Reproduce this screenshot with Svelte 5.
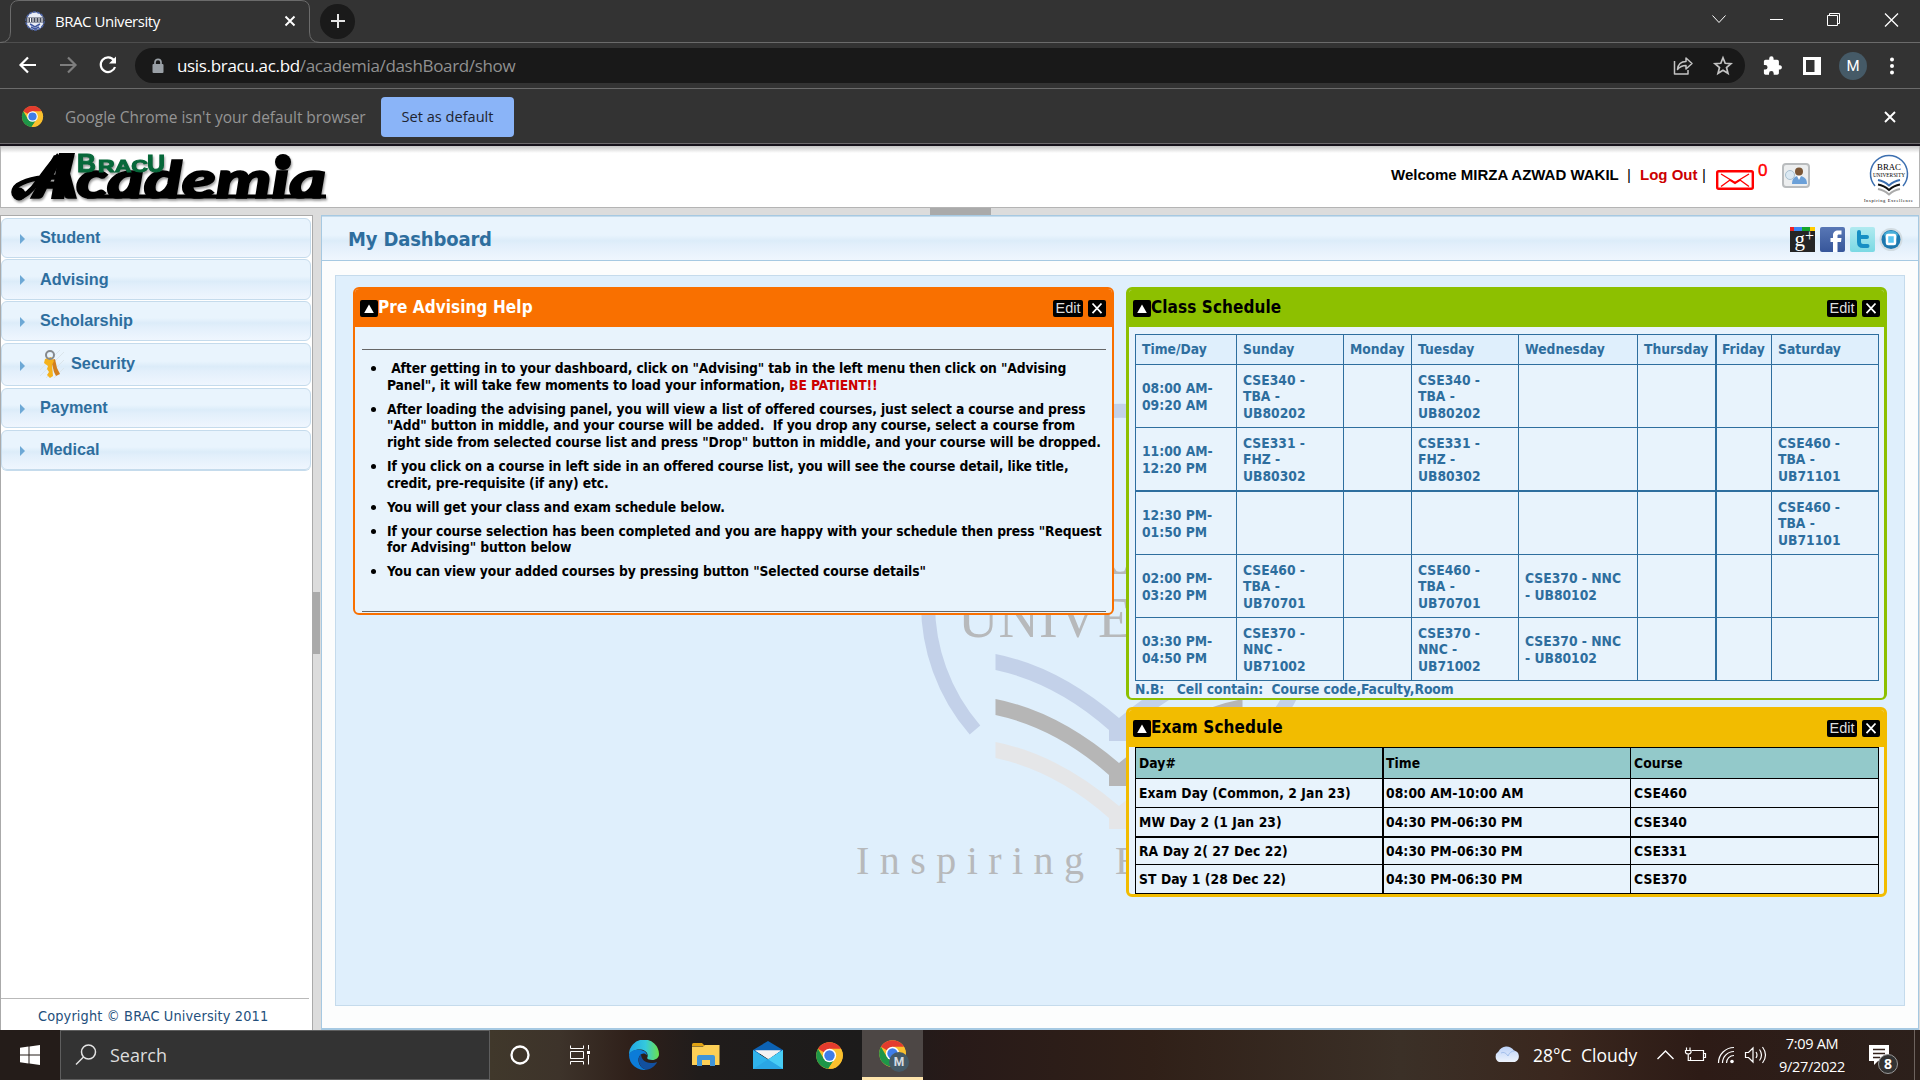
<script>
  const menu = [
    { label: 'Student', size: 'm1' },
    { label: 'Advising', size: 'm2' },
    { label: 'Scholarship', size: 'm3' },
    { label: 'Security', size: 'm4', keys: true },
    { label: 'Payment', size: 'm5' },
    { label: 'Medical', size: 'm6' }
  ];

  const tips = [
    ['\u00a0After getting in to your dashboard, click on "Advising" tab in the left menu then click on "Advising', 'Panel", it will take few moments to load your information, '],
    ['After loading the advising panel, you will view a list of offered courses, just select a course and press', '"Add" button in middle, and your course will be added.\u00a0 If you drop any course, select a course from', 'right side from selected course list and press "Drop" button in middle, and your course will be dropped.'],
    ['If you click on a course in left side in an offered course list, you will see the course detail, like title,', 'credit, pre-requisite (if any) etc.'],
    ['You will get your class and exam schedule below.'],
    ['If your course selection has been completed and you are happy with your schedule then press "Request', 'for Advising" button below'],
    ['You can view your added courses by pressing button "Selected course details"']
  ];

  const week = [
    ['Time/Day', 'Sunday', 'Monday', 'Tuesday', 'Wednesday', 'Thursday', 'Friday', 'Saturday'],
    ['08:00 AM-\n09:20 AM', 'CSE340 -\nTBA -\nUB80202', '', 'CSE340 -\nTBA -\nUB80202', '', '', '', ''],
    ['11:00 AM-\n12:20 PM', 'CSE331 -\nFHZ -\nUB80302', '', 'CSE331 -\nFHZ -\nUB80302', '', '', '', 'CSE460 -\nTBA -\nUB71101'],
    ['12:30 PM-\n01:50 PM', '', '', '', '', '', '', 'CSE460 -\nTBA -\nUB71101'],
    ['02:00 PM-\n03:20 PM', 'CSE460 -\nTBA -\nUB70701', '', 'CSE460 -\nTBA -\nUB70701', 'CSE370 - NNC\n- UB80102', '', '', ''],
    ['03:30 PM-\n04:50 PM', 'CSE370 -\nNNC -\nUB71002', '', 'CSE370 -\nNNC -\nUB71002', 'CSE370 - NNC\n- UB80102', '', '', '']
  ];

  const exams = [
    ['Day#', 'Time', 'Course'],
    ['Exam Day (Common, 2 Jan 23)', '08:00 AM-10:00 AM', 'CSE460'],
    ['MW Day 2 (1 Jan 23)', '04:30 PM-06:30 PM', 'CSE340'],
    ['RA Day 2( 27 Dec 22)', '04:30 PM-06:30 PM', 'CSE331'],
    ['ST Day 1 (28 Dec 22)', '04:30 PM-06:30 PM', 'CSE370']
  ];
</script>

{#snippet chromeLogo()}
  <svg class="chrome-logo" viewBox="0 0 48 48">
    <circle cx="24" cy="24" r="22" fill="#fbc02d" />
    <path d="M24 24 L4.9 13 A22 22 0 0 1 43.1 13 Z" fill="#e33b2e" />
    <path d="M4.9 13 A22 22 0 0 0 22 46 L33 29 L24 24 L14.5 29.5 Z" fill="#1e9648" />
    <path d="M24 13 H43 A22 22 0 0 1 22 46 L33.5 29.5 Z" fill="#fbc02d" />
    <circle cx="24" cy="24" r="11" fill="#fff" />
    <circle cx="24" cy="24" r="8.6" fill="#3f7de8" />
  </svg>
{/snippet}

{#snippet panelHead(title)}
  <div class="panel-head">
    <svg class="collapse" viewBox="0 0 18 17"><rect width="18" height="17" rx="2" fill="#000" /><path d="M9 4.500 L13.800 13 H4.200 Z" fill="#fff" /></svg>
    <h2>{title}</h2>
    <span class="edit">Edit</span>
    <svg class="close" viewBox="0 0 18 17"><rect width="18" height="17" rx="2" fill="#000" /><path d="M4.5 3.500 L13.5 13.2 M13.5 3.500 L4.5 13.2" stroke="#fff" stroke-width="1.8" /></svg>
  </div>
{/snippet}

{#snippet page(color, shift)}
  <g fill={color} transform="translate(0 {shift})">
    <path d="M995.5 654 Q1058 666 1119 718 Q1180 666 1242.500 654 V670 Q1182 683 1129 730 V741 H1109 V730 Q1056 683 995.5 670 Z" />
  </g>
{/snippet}

<div class="screen">
  <div class="tabstrip">
    <svg class="tab-shape" viewBox="0 0 340 43"><path d="M0 42.500 Q10.500 42.500 10.500 32 V9 Q10.500 .5 19 .5 H301 Q309.500 .5 309.500 9 V32 Q309.500 42.500 320 42.500" fill="#333" stroke="#6b6b6b" /></svg>
    <div class="tab">
      <svg class="favicon" viewBox="0 0 20 20"><circle cx="10" cy="10" r="9" fill="#e9edf6" stroke="#5068ac" stroke-width="1.5" stroke-dasharray="3 1" /><path d="M1 6.500H19V11.500H1Z" fill="#444b5c" /><path d="M3 7v4M5.500 7v4M8 7v4M11 7v4M14 7v4M17 7v4" stroke="#fff" /><path d="M5 13L10 16L15 13M6 16L10 18L14 16" stroke="#4158a0" fill="none" stroke-width="1.500" /></svg>
      <span class="tab-title">BRAC University</span>
      <svg class="x" viewBox="0 0 12 12"><path d="M1.500 1.500L10.500 10.500M10.500 1.500L1.500 10.500" /></svg>
    </div>
    <span class="plus"><svg viewBox="0 0 16 16"><path d="M8 1V15M1 8H15" /></svg></span>
    <svg class="winbtns" viewBox="0 0 190 20" fill="none" stroke="#fff">
      <path d="M3.500 6.500L10 13.500L16.500 6.500" />
      <path d="M61 10.500H74" />
      <path d="M118.500 6.500H128.500V16.500H118.500ZM120.500 6V4.500H130.500V14.500H129" />
      <path d="M176 4.500L189 17.500M189 4.500L176 17.500" stroke-width="1.300" />
    </svg>
  </div>

  <div class="toolbar">
    <svg class="nav" viewBox="0 0 110 24" fill="none" stroke="#fff" stroke-width="2.200">
      <path d="M18 12H3M10 4.500L2.500 12L10 19.500" />
      <path d="M42 12H57M50 4.500L57.500 12L50 19.500" stroke="#7e7e7e" />
      <path d="M96 7.500A7.300 7.300 0 1 0 97 14" />
      <path d="M98 3.500V10.500H91Z" fill="#fff" stroke="none" />
    </svg>
    <div class="omnibox">
      <svg class="lock" viewBox="0 0 12 16"><rect x=".5" y="6" width="11" height="9" rx="1" fill="#9aa0a6" /><path d="M3 7V4.300A3 3 0 0 1 9 4.300V7" fill="none" stroke="#9aa0a6" stroke-width="1.700" /></svg>
      <span class="url"><b>usis.bracu.ac.bd</b>/academia/dashBoard/show</span>
      <svg class="omni-icons" viewBox="0 0 60 22" fill="none" stroke="#c3c3c3" stroke-width="1.500">
        <path d="M1.500 6V19H15V15M4.500 14.500C5 9.500 8 6.500 13 6.500V3L19 8.500L13 14V10.500C9 10.500 6.500 12 4.500 14.500Z" stroke-linejoin="round" />
        <path d="M50 2.800L52.200 8.300L58 8.700L53.500 12.500L55 18.300L50 15.200L45 18.300L46.500 12.500L42 8.700L47.800 8.300Z" stroke-width="1.700" />
      </svg>
    </div>
    <svg class="puzzle" viewBox="0 0 20 20"><path d="M18.200 9.200h-1.300V5.500c0-.9-.8-1.700-1.700-1.700h-3.600V2.500a2.200 2.200 0 0 0-4.400 0v1.300H3.600c-.9 0-1.700.8-1.700 1.700v3.400h1.300a2.300 2.300 0 0 1 0 4.700H1.900V17c0 .9.8 1.700 1.700 1.700H7v-1.300a2.300 2.300 0 0 1 4.700 0v1.300h3.500c.9 0 1.700-.8 1.700-1.700v-3.500h1.300a2.200 2.200 0 0 0 0-4.300z" fill="#fff" /></svg>
    <svg class="sidepanel" viewBox="0 0 18 18"><path d="M0 0H18V18H0ZM3 3V15H11.500V3Z" fill="#fff" fill-rule="evenodd" /></svg>
    <span class="avatar">M</span>
    <svg class="dots" viewBox="0 0 4 18" fill="#fff"><circle cx="2" cy="2.500" r="2" /><circle cx="2" cy="9" r="2" /><circle cx="2" cy="15.500" r="2" /></svg>
  </div>

  <div class="infobar">
    {@render chromeLogo()}
    <span class="info-text">Google Chrome isn't your default browser</span>
    <button>Set as default</button>
    <svg class="x" viewBox="0 0 12 12"><path d="M1 1L11 11M11 1L1 11" /></svg>
  </div>

  <header>
    <svg class="brand" viewBox="0 0 330 56">
      <g class="brand-word">
        <path d="M58 9C42 26 34 44 22 50C13 54 9 45 17 39C28 32 42 31 60 31" fill="none" stroke="#000" stroke-width="5" />
        <circle cx="18" cy="48" r="6.500" />
        <path d="M58 7H74L63 53H50Z" />
        <text x="33" y="52" font-size="58" textLength="44" lengthAdjust="spacingAndGlyphs">A</text>
        <text x="75" y="52" font-size="52" textLength="250" lengthAdjust="spacingAndGlyphs">cademia</text>
        <path d="M86 50.500H325" stroke="#000" stroke-width="4" fill="none" />
        <circle cx="282" cy="16" r="8" />
      </g>
      <g class="brand-sub">
        <text x="76" y="26" font-size="25" textLength="19" lengthAdjust="spacingAndGlyphs">B</text>
        <text x="97" y="26" font-size="17" textLength="50" lengthAdjust="spacingAndGlyphs">RAC</text>
        <text x="146" y="26" font-size="24" textLength="18" lengthAdjust="spacingAndGlyphs">U</text>
      </g>
    </svg>
    <div class="account">
      <span class="welcome">Welcome MIRZA AZWAD WAKIL</span>
      <span class="bar">|</span>
      <span class="logout">Log Out</span>
      <span class="bar2">|</span>
      <svg class="mail" viewBox="0 0 38 20" fill="none" stroke="#f00"><rect x="1.200" y="1.200" width="35.600" height="17.600" rx="1.500" stroke-width="2.400" /><path d="M5 4L19 12.500L33 4M5 16.500L14 10M33 16.500L24 10" stroke-width="1.400" /><path d="M14 10L19 13L24 10" stroke-width="2" /></svg>
      <span class="count">0</span>
      <svg class="user" viewBox="0 0 30 28">
        <rect x="2" y="2" width="26" height="23" rx="3" fill="#eceeef" stroke="#b9bcbe" stroke-width="2" />
        <circle cx="18" cy="9.500" r="4" fill="#7a5636" /><path d="M11 22C11 15 15 14 18 14S26 15 26 22Z" fill="#6ba0d8" /><path d="M16 14L18 18L20 14Z" fill="#fff" />
        <circle cx="9" cy="13" r="4.500" fill="#dbe9f3" stroke="#a9c1d1" />
      </svg>
      <svg class="crest" viewBox="0 0 52 54">
        <path d="M12 35A18.500 18.500 0 1 1 40 35" fill="none" stroke="#3c6fb0" stroke-width="1.500" />
        <text x="14" y="19" font-size="9" textLength="24" lengthAdjust="spacingAndGlyphs">BRAC</text>
        <text x="10" y="26" font-size="6.500" textLength="32" lengthAdjust="spacingAndGlyphs">UNIVERSITY</text>
        <path d="M15 29Q21 30 26 34.500Q31 30 37 29" fill="none" stroke="#3c6fb0" stroke-width="2" />
        <path d="M15 33.500Q21 34.500 26 39Q31 34.500 37 33.500" fill="none" stroke="#111" stroke-width="2" />
        <path d="M15 38Q21 39 26 43.500Q31 39 37 38" fill="none" stroke="#aaa" stroke-width="2" />
        <text x="1" y="50.500" font-size="4.500" textLength="49">Inspiring Excellence</text>
      </svg>
    </div>
  </header>

  <div class="top-split"><i></i></div>

  <div class="workspace">
    <aside>
      <nav>
        {#each menu as item}
          <div class="item {item.size}">
            <i class="arrow"></i>
            {#if item.keys}
              <svg class="keys" viewBox="0 0 24 28">
                <path d="M0 20L20 0M0 26L24 2M6 28L24 10M14 28L24 18" stroke="#dbe5eb" />
                <path d="M11 10L15 9L17 18L20 24L16 26L14 22Z" fill="#d27f1e" />
                <path d="M5 9L11 7L14 11L12 15L13 26L10 28L7 25L9 22L7 19L8 16L4 13Z" fill="#f5b21b" />
                <circle cx="10" cy="5" r="4" fill="none" stroke="#85898d" stroke-width="2" />
              </svg>
            {/if}
            <span>{item.label}</span>
          </div>
        {/each}
      </nav>
      <footer>Copyright © BRAC University 2011</footer>
    </aside>
    <div class="side-split"><i></i></div>

    <main>
      <div class="titlebar">
        <h1>My Dashboard</h1>
        <svg class="social" viewBox="0 0 114 25">
          <defs><linearGradient id="fb" x2="0" y2="1"><stop stop-color="#5877b5" /><stop offset="1" stop-color="#37569a" /></linearGradient><linearGradient id="tw" x2="0" y2="1"><stop stop-color="#b0eaf0" /><stop offset="1" stop-color="#7ad9e4" /></linearGradient></defs>
          <rect width="25" height="25" fill="#252525" />
          <path d="M0 0H4V4H0Z" fill="#e22" /><path d="M4 0H12V4H4Z" fill="#3b86f5" /><path d="M12 0H20V4H12Z" fill="#12a52b" /><path d="M20 0H25V4H20Z" fill="#fc0" />
          <text x="4.500" y="19" class="gp">g</text><text x="15" y="14" class="gp small">+</text>
          <rect x="30" width="25" height="25" rx="2" fill="url(#fb)" />
          <path d="M43 25V15H40.500V11H43V8.500C43 5 45 3.500 48 3.500H51.500V7.500H49C47.800 7.500 47.500 8 47.500 9V11H51.500L51 15H47.500V25Z" fill="#fff" />
          <rect x="60" width="25" height="25" rx="2" fill="url(#tw)" />
          <path d="M69 5V15Q69 19 73 19H77.500M69 10H77" fill="none" stroke="#168fc4" stroke-width="4" stroke-linecap="round" />
          <circle cx="101" cy="12.500" r="11.500" fill="#d2dce2" /><circle cx="101" cy="12.500" r="9.500" fill="#1d78ae" /><path d="M94 7A9 9 0 0 1 108 7L104 18H98Z" fill="#48afd9" />
          <rect x="97" y="8" width="8" height="9" rx="1" fill="#59c5f0" stroke="#fff" stroke-width="2.500" />
        </svg>
      </div>
      <div class="board">
        <svg class="watermark" viewBox="336 276 1568 728">
          <path d="M975 730A193 193 0 1 1 1267 730" fill="none" stroke="#c3d1e9" stroke-width="14" />
          <text x="1029" y="574" font-size="72" textLength="186">BRAC</text>
          <text x="958" y="637" font-size="56">UNIVERSITY</text>
          {@render page('#c3d1e9', 0)}
          {@render page('#b6b6b6', 45)}
          {@render page('#e5e6e8', 88)}
          <text x="856" y="874" font-size="40" letter-spacing="10.450">Inspiring Excellence</text>
        </svg>

        <section class="panel orange">
          {@render panelHead('Pre Advising Help')}
          <div class="help">
            <hr />
            <ul>
              {#each tips as lines, i}
                <li>{#each lines as line}<span class="line">{line}{#if i === 0 && line.startsWith('Panel')}<em>BE PATIENT!!</em>{/if}</span>{/each}</li>
              {/each}
            </ul>
            <hr />
          </div>
        </section>

        <div class="column">
          <section class="panel green">
            {@render panelHead('Class Schedule')}
            <div class="class-grid">
              {#each week as row, r}
                {#each row as cell, c}
                  <div class:head={r === 0} class:thick-top={r === 3} class:thick-left={c === 6}>{cell}</div>
                {/each}
              {/each}
            </div>
            <p class="note">N.B:&nbsp;&nbsp; Cell contain:&nbsp; Course code,Faculty,Room</p>
          </section>

          <section class="panel yellow">
            {@render panelHead('Exam Schedule')}
            <div class="exam-grid">
              {#each exams as row, r}
                {#each row as cell, c}
                  <div class:head={r === 0} class:thick-top={r === 3} class:thick-left={c === 1}>{cell}</div>
                {/each}
              {/each}
            </div>
          </section>
        </div>
      </div>
    </main>
  </div>

  <div class="taskbar">
    <span class="start"><svg viewBox="0 0 20 20" fill="#fff"><path d="M0 2.800L8.500 1.600V9.500H0ZM9.500 1.400L20 0V9.500H9.500ZM0 10.500H8.500V18.400L0 17.200ZM9.500 10.500H20V20L9.500 18.600Z" /></svg></span>
    <div class="search">
      <svg viewBox="0 0 22 22" fill="none" stroke="#e4e4e4" stroke-width="1.500"><circle cx="13.500" cy="8" r="7" /><path d="M8.500 13L1 20.500" /></svg>
      <span>Search</span>
    </div>
    <svg class="cortana" viewBox="0 0 20 20"><circle cx="10" cy="10" r="8.500" fill="none" stroke="#fff" stroke-width="2.300" /></svg>
    <svg class="taskview" viewBox="0 0 20 20" fill="none" stroke="#fff"><path d="M.5 .5V3.500H13.500V.5M.5 19.500V16.500H13.500V19.500M.5 6.500H13.500V13.500H.5ZM18.500 0V4.500M18.500 10V19.500" /><rect x="17.500" y="6.500" width="2" height="2" fill="#fff" /></svg>
    <svg class="edge" viewBox="0 0 30 30">
      <defs>
        <linearGradient id="eg" x1="0" x2="1"><stop stop-color="#1fa6e6" /><stop offset=".55" stop-color="#35c9dd" /><stop offset="1" stop-color="#6be24c" /></linearGradient>
      </defs>
      <path d="M0 15A15 15 0 0 1 30 14C30 19 25 21 20 19.500C18 19 18 18 18.500 17C19.500 14 17 10 12 9.500C6 9 1 12 0 15Z" fill="url(#eg)" />
      <path d="M0 15C1 11 6 9 12 10C17 11 18 14 18 15C14 11 9 15 9.500 21C10 26 15 30 18 29.700A15 15 0 0 1 0 15Z" fill="#0c7cd8" />
      <path d="M12 14C8 18 9 27 17 29.800C22 29.500 26 26 28 22.500C27.500 21.500 26 23 22 23C16 23 12 19 12 14Z" fill="#12509f" />
    </svg>
    <svg class="folder" viewBox="0 0 28 24"><path d="M0 1.500Q0 0 1.500 0H10L13 3H0Z" fill="#e0a212" /><path d="M0 3.500H11L13 2H27.500V22H0Z" fill="#fccf56" /><path d="M5 23V14Q5 12 7 12H21Q23 12 23 14V23H18V17H10V23Z" fill="#3f94d8" /></svg>
    <svg class="mailapp" viewBox="0 0 30 28"><path d="M0 9L15 0L30 9V13H0Z" fill="#0c62b4" /><path d="M2 9.500H28L16 18Z" fill="#f3f3f3" /><path d="M0 9L15 18.500L30 9V28H0Z" fill="#2fb3ec" /><path d="M15 18.500L30 9V28Z" fill="#48cdf5" /><path d="M2.500 9.500H27.500L15 18Z" fill="#f3f3f3" /><path d="M0 28L15 18.500L30 28Z" fill="#2aa6e4" /></svg>
    <span class="app">{@render chromeLogo()}</span>
    <span class="app active">{@render chromeLogo()}<b>M</b></span>

    <div class="tray">
      <svg class="cloud" viewBox="0 0 28 18"><defs><linearGradient id="cl" x2="0" y2="1"><stop stop-color="#bcd2f8" /><stop offset="1" stop-color="#edf3fc" /></linearGradient></defs><path d="M6 18A6 6 0 0 1 5.500 7.500A9 9 0 0 1 21 6.500A6 6 0 0 1 22 18Z" fill="url(#cl)" /><path d="M8 9Q12 7 15 12Q17 7 21.500 7" stroke="#a4c0ec" fill="none" /></svg>
      <span class="temp">28°C</span><span class="sky">Cloudy</span>
      <svg class="trayicons" viewBox="0 0 110 24" fill="none" stroke="#fff" stroke-width="1.400">
        <path d="M.5 16L8.500 8L16.500 16" />
        <path d="M35 7.500H46.500V17.500H33.500V14M47 10.500H48.500V14.500H47M29.500 4.500V7M33 4.500V7M28.500 7.500H34V9.500Q33.500 11 31.250 11Q29 11 28.500 9.500ZM31.250 11V17.500H34" stroke-width="1.200" />
        <path d="M61.500 20A15.500 15.500 0 0 1 77 4.500M65.500 20A11.500 11.500 0 0 1 77 8.500M69.500 20A7.500 7.500 0 0 1 77 12.500" stroke-width="1.200" /><circle cx="75" cy="18.500" r="1.800" fill="#fff" stroke="none" />
        <path d="M88.500 9.500H91.500L96 5V19L91.500 14.500H88.500ZM99 9Q101 12 99 15M102.500 6.500Q106.500 12 102.500 17.500M105.500 4Q111.500 12 105.500 20" stroke-width="1.200" />
      </svg>
      <div class="clock"><span>7:09 AM</span><span>9/27/2022</span></div>
      <div class="notice"><svg viewBox="0 0 20 20"><path d="M0 0H20V16H9L5 20V16H0Z" fill="#fff" /><path d="M4 4.500H16M4 8.500H16M4 12.500H11" stroke="#33221b" stroke-width="1.300" /></svg><b>8</b></div>
    </div>
  </div>
</div>

<style>
  :global(body) { margin: 0; overflow: hidden; }
  .screen { width: 1920px; height: 1080px; display: flex; flex-direction: column; overflow: hidden; background: #dcdcdc; font-family: 'DejaVu Sans Condensed', 'DejaVu Sans', sans-serif; }
  .screen * { box-sizing: border-box; }
  svg { display: block; flex: none; }
  span { white-space: nowrap; }

  .tabstrip { position: relative; flex: none; height: 43px; background: #333; border-bottom: 1px solid #6b6b6b; display: flex; align-items: center; font-family: 'Open Sans', sans-serif; }
  .tab-shape { position: absolute; left: 0; top: 0; width: 340px; height: 43px; }
  .tab { position: relative; width: 320px; padding: 0 24px 0 25px; display: flex; align-items: center; }
  .favicon { width: 20px; height: 20px; margin-right: 10px; }
  .tab-title { color: #fff; font-size: 15px; letter-spacing: -.45px; flex: 1; margin-top: -1px; }
  .x { width: 12px; height: 12px; fill: none; stroke: #fff; stroke-width: 1.9; }
  .plus { width: 35px; height: 35px; border-radius: 50%; background: #1a1a1a; display: grid; place-items: center; position: relative; }
  .plus svg { width: 16px; height: 16px; stroke: #e5e5e5; stroke-width: 2; }
  .winbtns { width: 190px; height: 20px; margin-left: auto; margin-right: 21px; margin-top: -5px; }

  .toolbar { flex: none; height: 46px; background: #333; border-bottom: 1px solid #6b6b6b; display: flex; align-items: center; padding-left: 18px; font-family: 'Open Sans', sans-serif; }
  .nav { width: 110px; height: 24px; margin-top: -1px; }
  .omnibox { margin-left: 7px; width: 1610px; height: 35px; border-radius: 18px; background: #191919; display: flex; align-items: center; padding: 0 12px 0 17px; }
  .lock { width: 12px; height: 16px; }
  .url { margin: -1px 0 0 13px; flex: 1; font-size: 17px; color: #919191; letter-spacing: -.33px; }
  .url b { color: #fff; font-weight: 400; }
  .omni-icons { width: 60px; height: 22px; }
  .puzzle { width: 20px; height: 20px; margin-left: 17px; }
  .sidepanel { width: 18px; height: 18px; margin-left: 21px; }
  .avatar { width: 28px; height: 28px; margin-left: 18px; border-radius: 50%; background: #455a67; color: #fff; display: grid; place-items: center; font: 15px Roboto, sans-serif; }
  .dots { width: 4px; height: 18px; margin-left: 23px; }

  .infobar { flex: none; height: 57px; background: #333; border-bottom: 2px solid #16121a; box-shadow: inset 0 -1px #6d6a6d; display: flex; align-items: center; padding: 0 24px 0 21px; font-family: 'Open Sans', sans-serif; }
  .chrome-logo { width: 23px; height: 23px; }
  .info-text { margin-left: 21px; width: 316px; color: #959595; font-size: 15.500px; letter-spacing: -.04px; }
  button { width: 133px; height: 40px; border: 0; border-radius: 4px; background: #8ab4f8; color: #1e2430; padding: 0 0 2px; font: 14.600px 'Open Sans', sans-serif; }
  .infobar .x { margin-left: auto; }

  header { flex: none; height: 62px; background: linear-gradient(#c6c6c6, #fff 7px); border: solid #b4b4b4; border-width: 0 1px 1px; display: flex; justify-content: space-between; }
  .brand { width: 330px; height: 56px; filter: drop-shadow(1px 2px 1px #999); }
  .brand-word { font-family: Lato, sans-serif; font-weight: 900; font-style: italic; }
  .brand-word text { stroke: #000; stroke-width: 1.6; }
  .brand-sub { font-family: 'Liberation Sans', sans-serif; font-weight: 700; fill: #07683a; stroke: #07683a; }
  .account { display: flex; font: 700 15px 'Liberation Sans', sans-serif; padding-top: 20px; }
  .welcome { width: 236px; }
  .bar { width: 13px; font-weight: 400; }
  .logout { width: 62px; color: #c00; }
  .bar2 { width: 14px; font-weight: 400; }
  .mail { width: 38px; height: 20px; margin-top: 4px; }
  .count { margin: -5px 15px 0 4px; color: #f00; font: 17px 'Liberation Sans', sans-serif; width: 10px; -webkit-text-stroke: .4px #f00; }
  .user { width: 30px; height: 28px; margin: -4px 52px 0 -2px; }
  .crest { width: 52px; height: 54px; margin: -15px 4px 0 0; font-family: 'Liberation Serif', serif; font-weight: 400; }

  .top-split { flex: none; height: 7px; display: flex; justify-content: center; }
  .top-split i { width: 61px; background: #aaa; }
  .workspace { flex: 1; min-height: 0; display: flex; }
  aside { width: 313px; background: #fff; border: solid #aaa; border-width: 1px 1px 0; display: flex; flex-direction: column; }
  nav { padding: 2px 0 0; flex: 1; }
  .item { width: 310px; height: 40px; margin-bottom: 1px; border: 1px solid #c5dbec; border-radius: 6px; background: linear-gradient(#e9f4fd 0 42%, #dcecf9 55%, #e2effb 65%, #eff6fe); display: flex; align-items: center; padding: 0 0 2px 18px; color: #2e6e9e; font: 700 16.250px 'Liberation Sans', sans-serif; }
  .m2 { height: 41px; padding-bottom: 0; }
  .m3 { margin-bottom: 2px; }
  .m4 { height: 43px; margin-bottom: 2px; }
  .m5 { margin-bottom: 2px; }
  .m6 { box-shadow: 0 1px #c5dbec; }
  .arrow { border: solid transparent; border-width: 5px 0 5px 5px; border-left-color: #6da8d5; margin: 4px 15px 0 0; }
  .m2 .arrow { margin-top: 1px; }
  .keys { width: 24px; height: 28px; margin-right: 7px; }
  footer { height: 32px; width: 308px; border-top: 1px solid #b9b9b9; display: flex; align-items: center; padding-left: 37px; color: #244f7c; font-size: 14.400px; letter-spacing: .14px; padding-top: 2px; }
  .side-split { width: 8px; padding-right: 1px; display: flex; flex-direction: column; justify-content: center; }
  .side-split i { height: 62px; background: #aaa; }

  main { flex: 1; background: #fcfdfd; border: 1px solid #a6c9e2; border-bottom-width: 2px; display: flex; flex-direction: column; min-width: 0; margin-right: 1px; }
  .titlebar { flex: none; height: 45px; border-top: 1px solid #c5dbec; border-bottom: 1px solid #a6c9e2; background: linear-gradient(#e9f4fd 0 42%, #dcecf9 55%, #e2effb 65%, #eff6fe); display: flex; justify-content: space-between; align-items: center; padding: 0 14px 0 26px; }
  h1 { margin: 0; color: #2e6e9e; font-size: 20px; letter-spacing: -.15px; }
  .social { width: 114px; height: 25px; margin-top: 1px; }
  .gp { font: 21px 'Liberation Serif', serif; fill: #fff; }
  .gp.small { font-size: 16px; }

  .board { position: relative; flex: 1; margin: 14px 13px 22px; border: 1px solid #c5dbec; background: #dfeffc; padding: 11px 17px 0 17px; display: flex; justify-content: space-between; align-items: flex-start; }
  .watermark { position: absolute; left: 0; top: 0; width: 1568px; height: 728px; font-family: 'Liberation Serif', serif; fill: #b7b9bb; }
  .panel { position: relative; border: 3px solid; border-radius: 6px; background: #e8f3fc; overflow: hidden; font-weight: 700; font-size: 13.750px; }
  .orange { width: 761px; height: 328px; border-color: #f97000; border-width: 2px; }
  .column { width: 761px; display: flex; flex-direction: column; gap: 7px; }
  .green { height: 413px; border-color: #8dc000; border-bottom-width: 2px; }
  .yellow { height: 190px; border-color: #f2bc00; }
  .panel-head { height: 37px; display: flex; padding: 10px 4px 0; color: #000; }
  .orange .panel-head { height: 38px; padding: 11px 6px 0 5px; background: #f97000; color: #fff; }
  .green .panel-head { background: #8dc000; }
  .yellow .panel-head { background: #f2bc00; }
  .collapse, .close { width: 18px; height: 17px; }
  h2 { flex: 1; margin: -4px 0 0; font-size: 17px; line-height: 22px; letter-spacing: .08px; }
  .edit { width: 30px; height: 17px; margin-right: 5px; border-radius: 2px; background: #000; color: #ddd; font: 14.500px/17px 'Liberation Sans', sans-serif; text-align: center; }

  .help { padding: 22px 6px 0 7px; color: #000; letter-spacing: -.128px; }
  hr { margin: 0; border: 0; height: 1px; background: #666; }
  ul { margin: 0; padding: 10px 0 0 25px; height: 261px; list-style: none; }
  li { margin-bottom: 7.500px; position: relative; }
  li::before { content: ''; position: absolute; left: -16px; top: 6px; width: 5px; height: 5px; border-radius: 50%; background: #000; }
  .line { display: block; line-height: 16.600px; }
  em { font-style: normal; color: #c00; }

  .class-grid { margin: 7px 0 0 6px; width: 744px; display: grid; grid-template-columns: 101px 107px 68px 107px 119px 78px 56px 107px; grid-template-rows: 30px 63px 63px 64px 63px 63px; border: solid #2e6e9e; border-width: 0 1px 1px 0; color: #2e6e9e; white-space: pre; line-height: 16.600px; }
  .class-grid > div { border: solid #2e6e9e; border-width: 1px 0 0 1px; padding: 1px 0 0 6px; display: flex; align-items: center; }
  .class-grid .head { background: #dfeffc; padding-top: 0; }
  .class-grid .thick-top, .exam-grid .thick-top { border-top-width: 2px; }
  .class-grid .thick-left, .exam-grid .thick-left { border-left-width: 2px; }
  .class-grid .thick-left { padding-left: 5px; }
  .note { margin: 0 0 0 6px; color: #2e6e9e; line-height: 17px; letter-spacing: -.07px; }
  .exam-grid { margin-left: 6px; width: 744px; display: grid; grid-template-columns: 247px 248px 248px; grid-template-rows: 31px 29px 29px 28px 29px; border: solid #000; border-width: 0 1px 1px 0; color: #000; letter-spacing: .08px; }
  .exam-grid > div { border: solid #000; border-width: 1px 0 0 1px; padding-left: 3px; display: flex; align-items: center; }
  .exam-grid .thick-left { padding-left: 2px; }
  .exam-grid .head { background: #93c9ca; }

  .taskbar { flex: none; height: 50px; background: linear-gradient(90deg, #241c19 0, #241c19 60px, #40382b 490px, #3d332a 560px, #2f201a 630px, #201c1b 700px, #1c1b1b 860px, #281a18 960px, #302018 1150px, #3b3027 1400px, #3a271e 1560px, #2d1b16 1700px, #2c201b 1920px); display: flex; align-items: center; font-family: 'Open Sans', sans-serif; }
  .start { width: 60px; padding-left: 20px; }
  .start svg { width: 20px; height: 20px; }
  .search { width: 430px; height: 50px; background: #333; border: 1px solid #5e5e5e; display: flex; align-items: center; padding-left: 14px; color: #ddd; font-size: 18px; }
  .search svg { width: 22px; height: 22px; margin-right: 13px; }
  .cortana { width: 20px; height: 20px; margin-left: 20px; }
  .taskview { width: 20px; height: 20px; margin-left: 40px; }
  .edge { width: 30px; height: 30px; margin-left: 39px; }
  .folder { width: 28px; height: 24px; margin-left: 33px; }
  .mailapp { width: 30px; height: 28px; margin-left: 33px; }
  .app { position: relative; margin-left: 16px; width: 61px; height: 50px; display: grid; place-items: center; }
  .app .chrome-logo { width: 29px; height: 29px; }
  .active { margin-left: 2px; background: #4d4745; border-bottom: 3px solid #ffe6ad; }
  .active b { position: absolute; left: 27px; top: 22px; width: 20px; height: 20px; border-radius: 50%; background: #455a67; color: #d5dbe0; font: 700 12px/20px Roboto, sans-serif; text-align: center; }
  .tray { margin-left: auto; height: 50px; display: flex; align-items: center; color: #fff; border-right: 1px solid #6d635e; margin-right: 5px; }
  .cloud { width: 28px; height: 18px; margin-top: -4px; }
  .temp { width: 48px; margin-left: 12px; font-size: 17.500px; }
  .sky { width: 76px; font-size: 17.500px; }
  .trayicons { width: 110px; height: 24px; }
  .clock { width: 82px; margin: 0 16px 0 4px; display: flex; flex-direction: column; align-items: center; font-size: 14.500px; line-height: 23px; letter-spacing: -.3px; }
  .notice { position: relative; width: 45px; height: 20px; margin-top: -1px; }
  .notice svg { width: 20px; height: 20px; }
  .notice b { position: absolute; left: 9px; top: 9px; width: 20px; height: 20px; border: 1px solid #999; border-radius: 50%; background: #333; font: 700 14px/18px 'Open Sans', sans-serif; text-align: center; }
</style>
